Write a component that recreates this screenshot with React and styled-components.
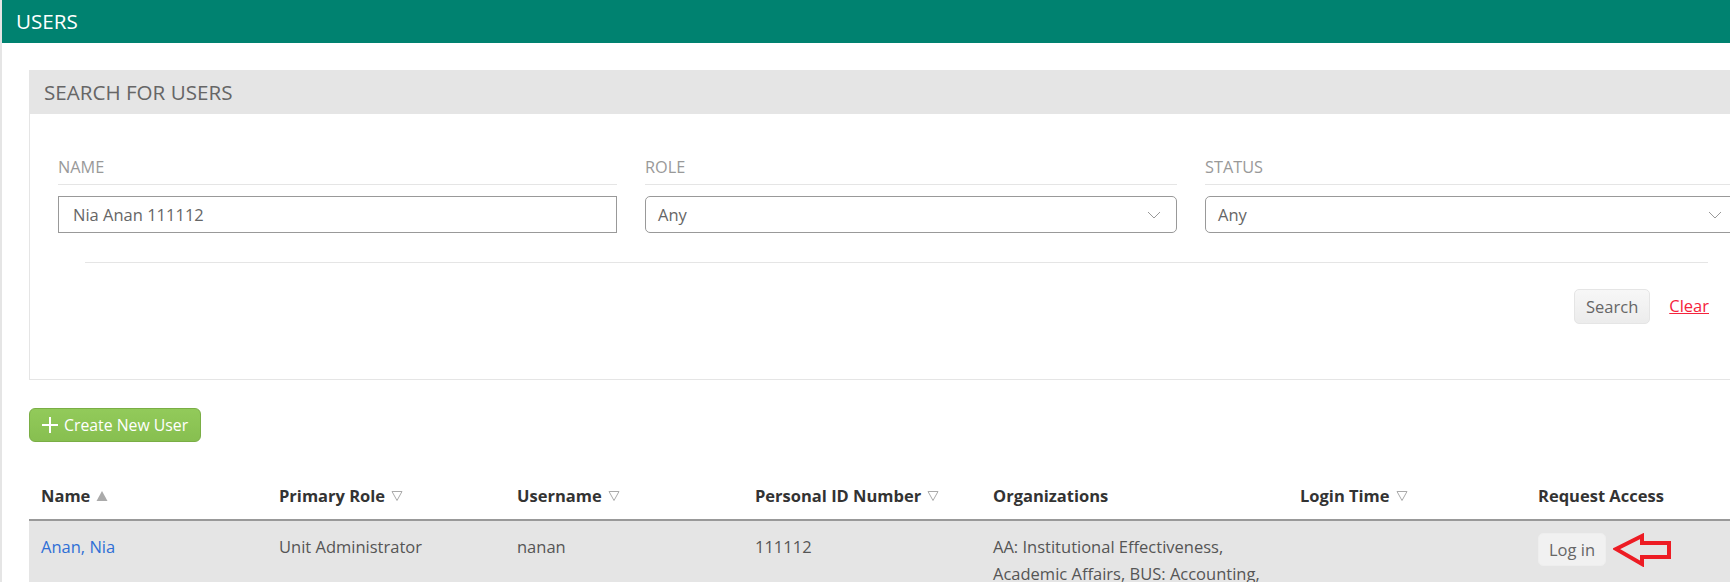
import React from 'react';
import styled, { createGlobalStyle } from 'styled-components';

const GlobalStyle = createGlobalStyle`
  html, body {
    margin: 0;
    height: 582px;
    overflow: hidden;
    background: #e5e5e5;
  }
  body {
    font-family: "Open Sans", "Liberation Sans", sans-serif;
    font-size: 16.5px;
    color: #555;
  }
`;

const Page = styled.div`
  width: 1790px;
  height: 582px;
  margin-left: 2px;
  background: #fff;
  overflow: hidden;
`;

const TopBar = styled.h1`
  margin: 0;
  height: 43px;
  padding-left: 14px;
  background: #008270;
  color: #fff;
  font-size: 20.6px;
  font-weight: 400;
  line-height: 43px;
`;

const Content = styled.div`
  padding: 27px 0 0 27px;
`;

const Panel = styled.section`
  height: 310px;
  box-sizing: border-box;
  border-left: 1px solid #e5e5e5;
  border-bottom: 1px solid #e5e5e5;
`;

const PanelTitle = styled.h2`
  margin: 0;
  height: 44px;
  padding-left: 14px;
  background: #e5e5e5;
  color: #666;
  font-size: 20.6px;
  font-weight: 400;
  line-height: 44px;
`;

const Fields = styled.div`
  display: grid;
  grid-template-columns: 559px 532px 533px;
  column-gap: 28px;
  padding: 39px 0 0 28px;
`;

const Label = styled.div`
  height: 31px;
  margin-bottom: 11px;
  border-bottom: 1px solid #e5e5e5;
  color: #999;
  font-size: 16.3px;
  line-height: 28px;
`;

const TextBox = styled.div`
  height: 37px;
  box-sizing: border-box;
  padding-left: 14px;
  border: 1px solid #999;
  color: #666;
  line-height: 35px;
`;

const SelectBox = styled(TextBox)`
  display: flex;
  align-items: center;
  justify-content: space-between;
  padding: 0 15px 0 12px;
  border-radius: 5px;
`;

const Chevron = () => (
  <svg width="14" height="8" viewBox="0 0 14 8" fill="none" stroke="#999" strokeWidth="1">
    <path d="M1 1l6 6 6-6" />
  </svg>
);

const Rule = styled.div`
  width: 1623px;
  margin: 29px 0 0 55px;
  border-top: 1px solid #e5e5e5;
`;

const Actions = styled.div`
  display: flex;
  align-items: center;
  width: 1679px;
  justify-content: flex-end;
  gap: 19px;
  margin-top: 26px;
`;

const GreyButton = styled.button`
  height: 35px;
  padding: 0 11px;
  border: 1px solid #e5e5e5;
  border-radius: 5px;
  background: linear-gradient(#f7f7f7, #ececec);
  color: #666;
  font: inherit;
`;

const ClearLink = styled.a`
  margin-bottom: 2px;
  color: #f5233c;
  text-decoration: underline;
`;

const CreateButton = styled.button`
  display: flex;
  align-items: center;
  gap: 5px;
  height: 34px;
  margin-top: 28px;
  padding: 0 12px 0 11px;
  box-sizing: border-box;
  border: 1px solid #7aae45;
  border-radius: 6px;
  background: linear-gradient(#92ca5a, #87bf50);
  color: #fff;
  font: inherit;
  font-size: 15.8px;
`;

const Columns = styled.div`
  display: grid;
  grid-template-columns: 238px 238px 238px 238px 307px 238px 252px;
  padding-left: 12px;
`;

const HeadRow = styled(Columns)`
  height: 79px;
  box-sizing: border-box;
  align-items: end;
  padding-bottom: 12px;
  border-bottom: 2px solid #999;
`;

const HeadCell = styled.div`
  display: flex;
  align-items: center;
  gap: 6px;
  color: #333;
  font-weight: 700;
  line-height: 22px;
`;

const BodyRow = styled(Columns)`
  min-height: 80px;
  padding-top: 12px;
  background: #e5e5e5;
  line-height: 27px;
  color: #555;
`;

const NameLink = styled.a`
  color: #2f6fd6;
`;

const OrgCell = styled.div`
  width: 275px;
`;

const AccessCell = styled.div`
  display: flex;
  align-items: flex-start;
  gap: 7px;
`;

const LoginButton = styled(GreyButton)`
  width: 68px;
  height: 33px;
  padding: 0;
  border-color: #eee;
  background: #f1f1f1;
`;

const SortMark = ({ up }) => (
  <svg width="12" height="10" viewBox="0 0 12 10">
    {up ? (
      <path d="M6 0l5.500 10H.5z" fill="#aaa" />
    ) : (
      <path d="M1 .5h10L6 9.500z" fill="none" stroke="#aaa" />
    )}
  </svg>
);

const PointerArrow = () => (
  <svg width="60" height="34" viewBox="0 0 60 34" fill="none" stroke="#ed1c24" strokeWidth="4">
    <path d="M3 16L29 3v7h27v14H29v7z" />
  </svg>
);

const headings = [
  ['Name', 'up'],
  ['Primary Role', 'down'],
  ['Username', 'down'],
  ['Personal ID Number', 'down'],
  ['Organizations'],
  ['Login Time', 'down'],
  ['Request Access'],
];

export default function App() {
  return (
    <>
      <GlobalStyle />
      <Page>
        <TopBar>USERS</TopBar>
        <Content>
          <Panel>
            <PanelTitle>SEARCH FOR USERS</PanelTitle>
            <Fields>
              <div>
                <Label>NAME</Label>
                <TextBox>Nia Anan 111112</TextBox>
              </div>
              <div>
                <Label>ROLE</Label>
                <SelectBox>
                  Any
                  <Chevron />
                </SelectBox>
              </div>
              <div>
                <Label>STATUS</Label>
                <SelectBox>
                  Any
                  <Chevron />
                </SelectBox>
              </div>
            </Fields>
            <Rule />
            <Actions>
              <GreyButton>Search</GreyButton>
              <ClearLink>Clear</ClearLink>
            </Actions>
          </Panel>
          <CreateButton>
            <svg width="18" height="18" viewBox="0 0 18 18" stroke="#fff" strokeWidth="2">
              <path d="M9 1v16M1 9h16" />
            </svg>
            Create New User
          </CreateButton>
          <HeadRow>
            {headings.map(([title, sort]) => (
              <HeadCell key={title}>
                {title}
                {sort && <SortMark up={sort === 'up'} />}
              </HeadCell>
            ))}
          </HeadRow>
          <BodyRow>
            <NameLink>Anan, Nia</NameLink>
            <div>Unit Administrator</div>
            <div>nanan</div>
            <div>111112</div>
            <OrgCell>AA: Institutional Effectiveness, Academic Affairs, BUS: Accounting,</OrgCell>
            <div />
            <AccessCell>
              <LoginButton>Log in</LoginButton>
              <PointerArrow />
            </AccessCell>
          </BodyRow>
        </Content>
      </Page>
    </>
  );
}
